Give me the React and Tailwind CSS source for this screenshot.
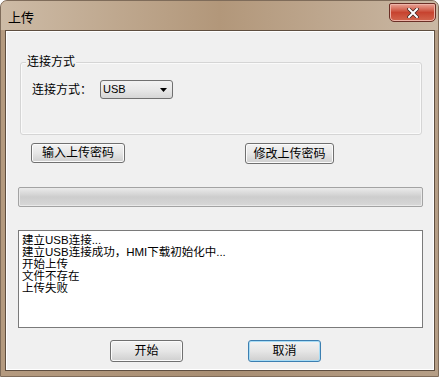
const font = "font-['Liberation_Sans','Noto_Sans_CJK_SC',sans-serif]";

const Btn = ({ children, className = "", focused = false }) => (
  <button
    className={`flex items-center justify-center rounded-[3px] border text-[12px] leading-none text-black bg-gradient-to-b from-[#f3f3f3] via-[#e6e6e6] to-[#cfcfcf] ${
      focused
        ? "border-[#3c7fb1] shadow-[inset_0_0_0_1px_#a8dcf5]"
        : "border-[#707070] shadow-[inset_0_0_0_1px_#fbfbfb]"
    } ${className}`}
  >
    {children}
  </button>
);

const App = () => {
  const logs = [
    "建立USB连接...",
    "建立USB连接成功，HMI下载初始化中...",
    "开始上传",
    "文件不存在",
    "上传失败",
  ];

  return (
    <div
      className={`w-[439px] h-[377px] flex flex-col rounded-t-[7px] border border-[#7f6c5a] bg-gradient-to-r from-[#b49a7f] via-[#a88e73] to-[#b59e86] ${font}`}
    >
      {/* title bar */}
      <div className="h-[29px] flex justify-between items-start rounded-t-[6px] bg-gradient-to-r from-[#cdbba6] via-[#b2977a] to-[#cab8a4]">
        <span className="mt-[10px] ml-[7px] text-[13px] leading-none text-black">上传</span>
        <div className="mt-[2px] mr-[2px] w-[47px] h-[19px] rounded-b-[5px] rounded-t-[2px] border border-[#6b2f26] flex items-center justify-center bg-gradient-to-b from-[#e8a497] via-[#c7432f] to-[#d2654d] shadow-[inset_0_0_0_1px_#eeb3a7]">
          <svg width="12" height="10" viewBox="0 0 12 10">
            <path d="M2 1 L10 9 M10 1 L2 9" stroke="#3d2520" strokeWidth="3.4" strokeLinecap="square" />
            <path d="M2 1 L10 9 M10 1 L2 9" stroke="#ffffff" strokeWidth="2" strokeLinecap="square" />
          </svg>
        </div>
      </div>

      {/* client area */}
      <div className="ml-[4px] mr-[3px] mb-[5px] flex-1 border border-[#5e4e40] shadow-[inset_0_0_0_1px_#ffffff] bg-[#f0f0f0] flex flex-col text-[12px] text-black">
        {/* group box */}
        <div className="mt-[31px] ml-[14px] w-[402px] h-[73px] rounded-[3px] border border-[#d5d5d5] shadow-[inset_0_0_0_1px_#fafafa] flex flex-col">
          <span className="-mt-[8px] ml-[5px] px-[1px] self-start bg-[#f0f0f0] leading-[14px]">连接方式</span>
          <div className="mt-[11px] ml-[11px] flex items-center">
            <span className="leading-none">连接方式：</span>
            <div className="ml-[8px] w-[73px] h-[19px] rounded-[3px] border border-[#707070] bg-gradient-to-b from-[#f2f2f2] via-[#e8e8e8] to-[#d6d6d6] flex items-center justify-between pl-[2px] pr-[5px]">
              <span className="text-[11px] leading-none">USB</span>
              <svg width="7" height="4" viewBox="0 0 7 4">
                <path d="M0 0 H7 L3.5 4 Z" fill="#000" />
              </svg>
            </div>
          </div>
        </div>

        {/* password buttons */}
        <div className="mt-[8px] flex">
          <Btn className="ml-[25px] w-[94px] h-[20px]">输入上传密码</Btn>
          <Btn className="ml-[120px] w-[89px] h-[21px]">修改上传密码</Btn>
        </div>

        {/* progress bar */}
        <div className="mt-[23px] ml-[12px] w-[405px] h-[20px] rounded-[2px] border border-[#a3a3a3] bg-gradient-to-b from-[#ebebeb] via-[#cdcdcd] to-[#d8d8d8] shadow-[inset_0_0_0_1px_#e9e9e9]" />

        {/* log box */}
        <div className="mt-[23px] ml-[12px] w-[405px] h-[98px] border border-[#7a7a7a] bg-white pl-[3px] pt-[3px] flex flex-col text-[11.5px]">
          {logs.map((l) => (
            <span key={l} className="leading-[12px] h-[12px] whitespace-nowrap">
              {l}
            </span>
          ))}
        </div>

        {/* bottom buttons */}
        <div className="mt-[12px] flex">
          <Btn className="ml-[104px] w-[73px] h-[22px]">开始</Btn>
          <Btn focused className="ml-[65px] w-[73px] h-[22px]">取消</Btn>
        </div>
      </div>
    </div>
  );
};

export default App;
